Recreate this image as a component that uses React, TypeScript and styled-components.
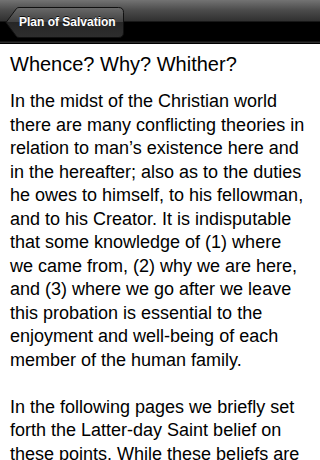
import styled, { createGlobalStyle } from "styled-components";

const GlobalStyle = createGlobalStyle`
  html, body {
    margin: 0;
    padding: 0;
    background: #ffffff;
  }
  body {
    width: 320px;
    height: 460px;
    overflow: hidden;
    font-family: "Liberation Sans", Arial, Helvetica, sans-serif;
  }
`;

const Screen = styled.div`
  width: 320px;
  height: 460px;
  overflow: hidden;
  background: #fff;
`;

const NavBar = styled.div`
  height: 44px;
  box-sizing: border-box;
  display: flex;
  align-items: center;
  padding-left: 5px;
  background: linear-gradient(
    to bottom,
    #737373 0px,
    #4c4c4c 10px,
    #303030 21px,
    #000 22px,
    #000 41px,
    #2c2c2c 42px,
    #2c2c2c 43px,
    #000 43px
  );
`;

const BackButton = styled.button`
  position: relative;
  height: 31px;
  width: 119px;
  padding: 0 0 0 14px;
  border: 0;
  background: none;
  display: flex;
  align-items: center;
  color: #fff;
  font-family: "Liberation Sans", Arial, sans-serif;
  font-weight: bold;
  font-size: 12px;
  text-shadow: 0 -1px 0 rgba(0, 0, 0, 0.8);
  cursor: pointer;

  svg {
    position: absolute;
    left: 0;
    top: 0;
  }

  span {
    position: relative;
  }
`;

const Content = styled.div`
  width: 296px;
  padding: 0 0 0 10px;
  color: #000;
`;

const Heading = styled.h1`
  margin: 7px 0 0 0;
  font-size: 20px;
  font-weight: normal;
  line-height: 26px;
`;

const Para = styled.p`
  margin: 13px 0 0 0;
  font-size: 18px;
  line-height: 23.5px;

  & + & {
    margin-top: 23.5px;
  }
`;

const BackShape = () => (
  <svg width="119" height="31" viewBox="0 0 119 31">
    <defs>
      <linearGradient id="bg" x1="0" y1="0" x2="0" y2="1">
        <stop offset="0" stopColor="#6a6a6a" />
        <stop offset="0.5" stopColor="#404040" />
        <stop offset="0.5" stopColor="#262626" />
        <stop offset="1" stopColor="#2e2e2e" />
      </linearGradient>
    </defs>
    <path
      d="M1 15.5 L11.5 1.5 Q12.5 0.5 14 0.5 L113.5 0.5 Q118.5 0.5 118.5 5.5 L118.5 25.5 Q118.5 30.5 113.5 30.5 L14 30.5 Q12.5 30.5 11.5 29.5 Z"
      fill="url(#bg)"
      stroke="#111"
      strokeWidth="1"
    />
  </svg>
);

export default function App() {
  return (
    <Screen>
      <GlobalStyle />
      <NavBar>
        <BackButton>
          <BackShape />
          <span>Plan of Salvation</span>
        </BackButton>
      </NavBar>
      <Content>
        <Heading>Whence? Why? Whither?</Heading>
        <Para>
          In the midst of the Christian world there are many conflicting
          theories in relation to man’s existence here and in the hereafter;
          also as to the duties he owes to himself, to his fellowman, and to
          his Creator. It is indisputable that some knowledge of (1) where we
          came from, (2) why we are here, and (3) where we go after we leave
          this probation is essential to the enjoyment and well-being of each
          member of the human family.
        </Para>
        <Para>
          In the following pages we briefly set forth the Latter-day Saint
          belief on these points. While these beliefs are founded on
          revelation, they also appeal to reason.
        </Para>
      </Content>
    </Screen>
  );
}
